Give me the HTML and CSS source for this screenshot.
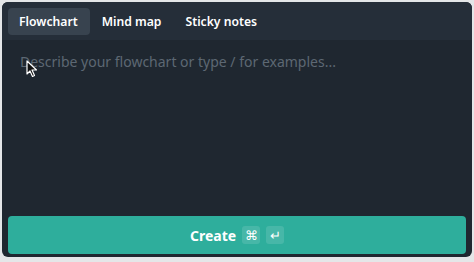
FILE: index.html
```html
<!DOCTYPE html>
<html lang="en">
<head>
  <meta charset="UTF-8" />
  <title>Create diagram</title>
  <link rel="stylesheet" href="styles.css">
</head>
<body>
  <div class="panel">
    <div class="tabs">
      <button class="tab active">Flowchart</button>
      <button class="tab">Mind map</button>
      <button class="tab">Sticky notes</button>
    </div>
    <div class="prompt">
      <textarea placeholder="Describe your flowchart or type / for examples..."></textarea>
      <!-- mouse pointer from the capture -->
      <svg class="cursor" width="12" height="18" viewBox="0 0 12 18">
        <path d="M1 1 L1 14 L4 11 L6.5 16.5 L8.5 15.5 L6 10 L10.5 10 Z" fill="#111" stroke="#fff" stroke-width="1.2" stroke-linejoin="round"/>
      </svg>
    </div>
    <div class="footer">
      <button class="create">Create <span class="key">&#8984;</span><span class="key">&#8629;</span></button>
    </div>
  </div>
</body>
</html>
```

FILE: styles.css
```css
body {
  margin: 0;
  padding: 2px 2px 5px 2px;
  background: #e4e6e8;
  font-family: "Noto Sans", sans-serif;
}
.panel {
  height: 255px;
  background: #1f2730;
  border-radius: 6px;
  display: flex;
  flex-direction: column;
  overflow: hidden;
}
.tabs {
  display: flex;
  gap: 1px;
  padding: 6px 6px 5px 6px;
  background: #252e39;
}
.tab {
  font-family: "Noto Sans", sans-serif;
  font-size: 12.2px;
  font-weight: 600;
  color: #ffffff;
  background: none;
  border: none;
  border-radius: 4px;
  padding: 0 12px 0 11px;
  height: 27px;
  cursor: pointer;
}
.tab.active {
  background: #38434f;
}
.prompt {
  flex: 1;
  position: relative;
  padding: 12px 12px 0 18px;
}
.prompt textarea {
  width: 100%;
  height: 150px;
  box-sizing: border-box;
  background: none;
  border: none;
  outline: none;
  resize: none;
  padding: 0;
  font-family: "Noto Sans", sans-serif;
  font-size: 14px;
  color: #ffffff;
}
.prompt textarea::placeholder {
  color: #5d6873;
}
.cursor {
  position: absolute;
  left: 24px;
  top: 20px;
}
.footer {
  padding: 0 6px 3px 6px;
}
.create {
  width: 100%;
  height: 38px;
  background: #2eae9c;
  border: none;
  border-radius: 4px;
  color: #ffffff;
  font-family: "Noto Sans", sans-serif;
  font-size: 14px;
  font-weight: 700;
  display: flex;
  align-items: center;
  justify-content: center;
  gap: 4px;
  cursor: pointer;
}
.key {
  display: inline-flex;
  align-items: center;
  justify-content: center;
  width: 18px;
  height: 18px;
  margin-left: 2px;
  border-radius: 3px;
  background: rgba(255, 255, 255, 0.12);
  font-size: 13px;
  font-weight: 400;
}
```
